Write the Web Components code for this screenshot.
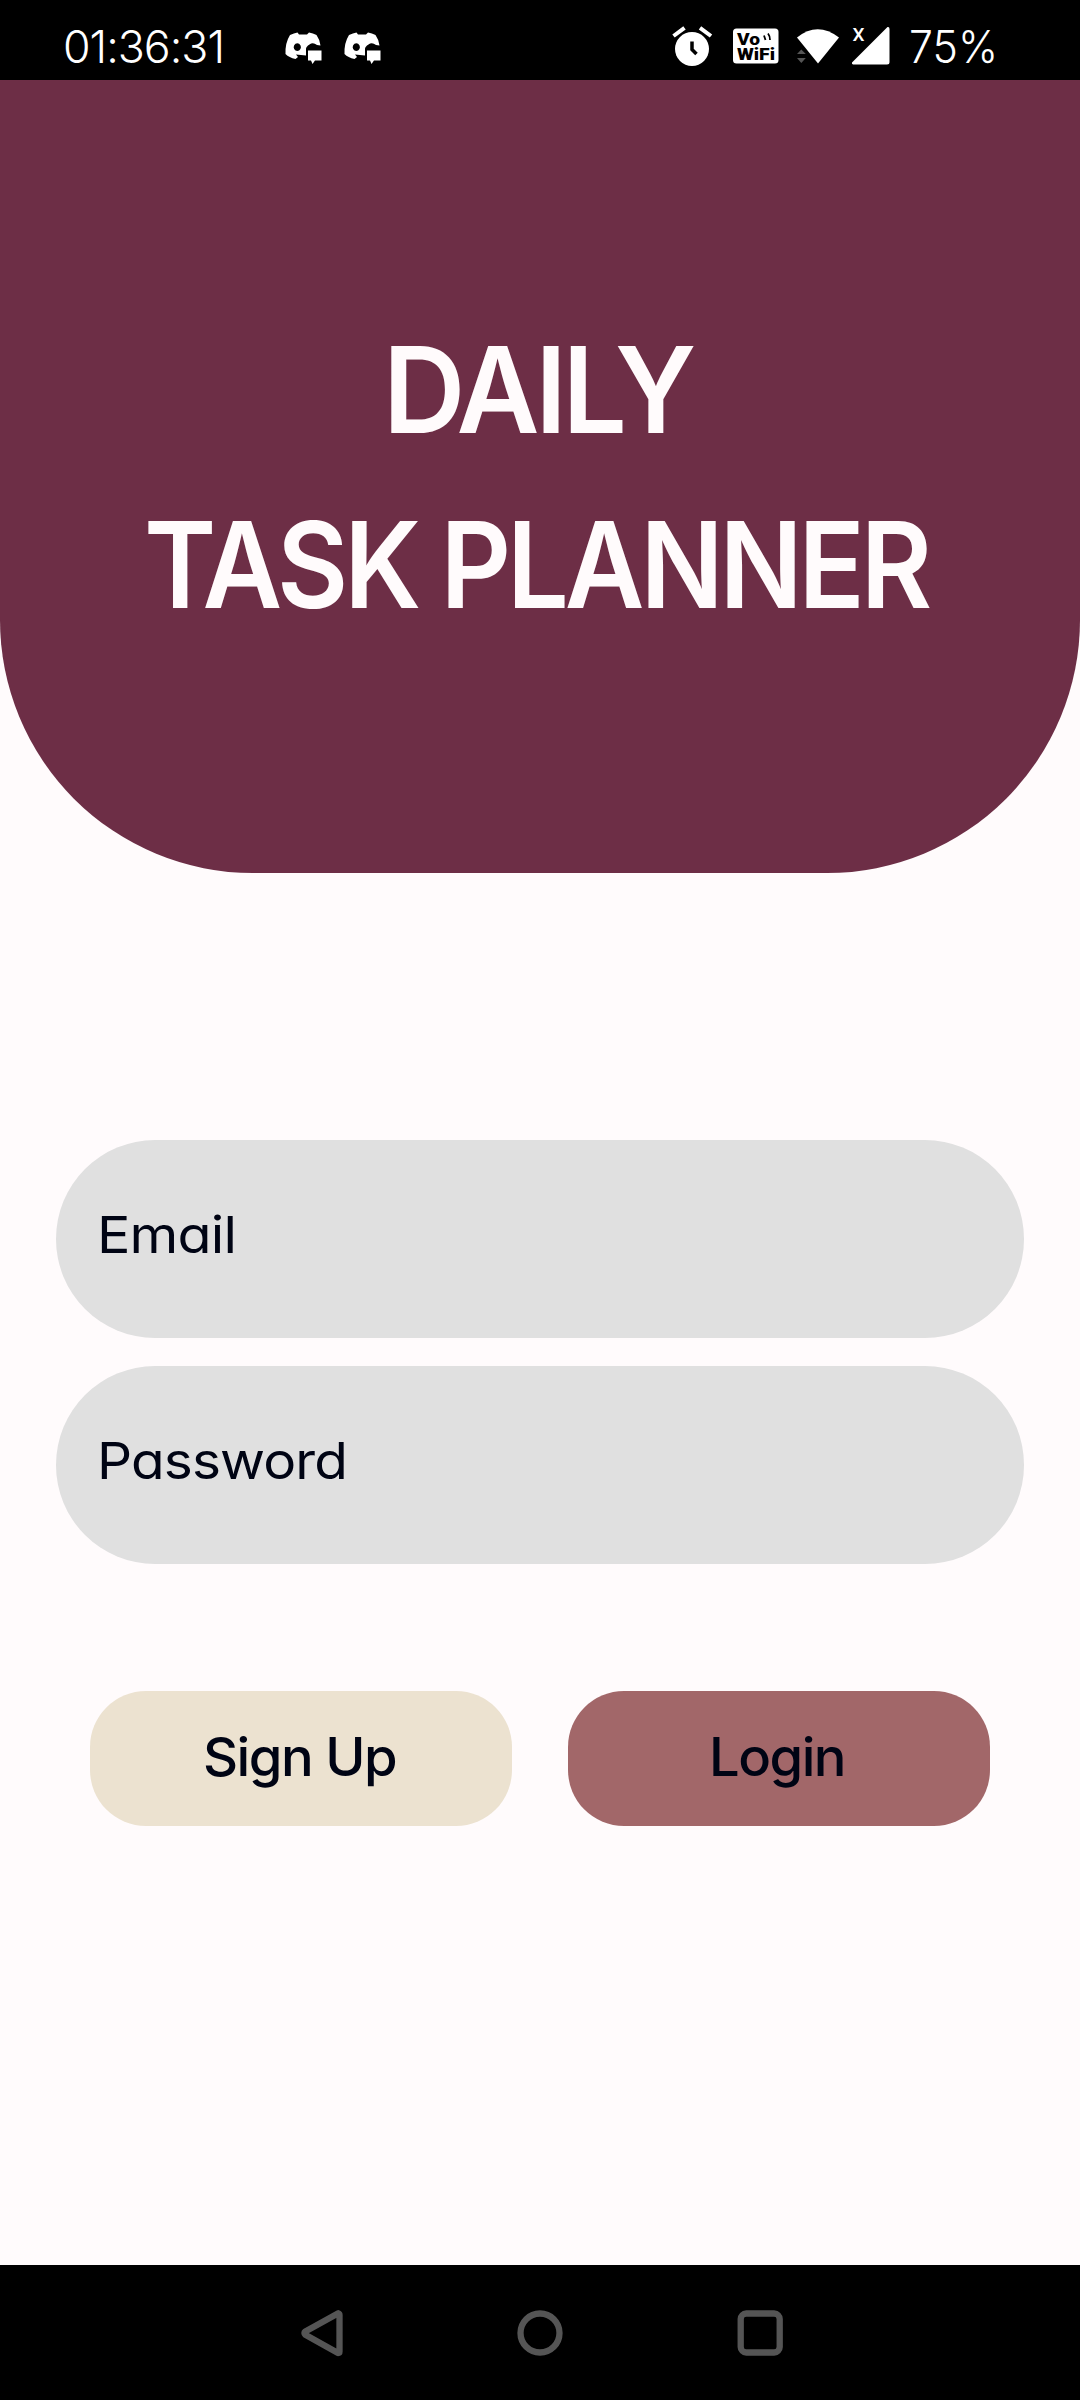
<!DOCTYPE html>
<html lang="en">
<head>
<meta charset="utf-8">
<title>Daily Task Planner</title>
<style>
html,body{margin:0;padding:0}
body{width:1080px;height:2400px;background:#fffbfc;overflow:hidden;font-family:Inter,"Noto Sans",sans-serif}
</style>
</head>
<body>
<planner-screen></planner-screen>
<script>
class Base extends HTMLElement{
  constructor(){super();this.attachShadow({mode:'open'}).innerHTML=this.render();}
}
/* Text condensed or widened so that its line is exactly `width` pixels long. */
class FitText extends Base{
  render(){return `<style>:host{display:block;white-space:pre;font-feature-settings:"cv11" 1,"calt" 0}span{display:inline-block;transform-origin:0 50%}</style><span><slot></slot></span>`}
  connectedCallback(){
    const s=this.shadowRoot.querySelector('span'),t=+this.getAttribute('width');
    const w=s.getBoundingClientRect().width;
    s.style.transform=`scaleX(${t/w})`;
    s.style.marginRight=(t-w)+'px';
  }
}
class StatusBar extends Base{
  render(){return `<style>
  :host{display:flex;height:80px;background:#000;color:#fff;box-sizing:border-box}
  .l,.r{display:flex;align-items:flex-start}
  .l{padding-left:63px;flex:1}
  fit-text{font-size:45.500px;font-weight:300;line-height:94px}
  svg{display:block}
  </style>
  <div class="l"><fit-text width="161" style="letter-spacing:-1px">01:36:31</fit-text>
  <svg width="120" height="80" viewBox="280 0 120 80" style="margin-left:56px">
    <defs><g id="d"><path fill="#fff" fill-rule="evenodd" d="M290 35Q294 33 297.500 32.500L299 34.500H307L309 32.500Q313 33 316.500 35Q320 40 320.500 45.500L317 45Q313 42 309.500 44.500Q306 46.500 306 49V55.500L296 54.500L298 57L295.500 59Q289 57.500 285.500 54Q285 43 290 35ZM297.300 43.200A3.600 3.900 0 1 0 297.310 43.200Z"/><path fill="#fff" d="M308 50.500H321.500V60.500H315L312.500 64L311 60.500H308Z"/></g></defs>
    <use href="#d"/><use href="#d" x="59"/>
  </svg></div>
  <div class="r">
  <svg width="230" height="80" viewBox="665 0 230 80">
    <g stroke="#fff" stroke-width="4" fill="none"><path d="M673.500 36L684.500 27.800M700 27.800L711 36"/></g>
    <circle cx="692" cy="49" r="17" fill="#fff"/><path d="M692 41.500V49.500L696.500 54" fill="none" stroke="#000" stroke-width="3.500"/>
    <rect x="733" y="28.500" width="45.500" height="35" rx="3.500" fill="#fff"/>
    <g fill="#000" font-family="Roboto,sans-serif" font-weight="900" font-size="17"><text x="737" y="44.500" textLength="23" lengthAdjust="spacingAndGlyphs">Vo</text><text x="737" y="60.300" textLength="38" lengthAdjust="spacingAndGlyphs">WiFi</text></g>
    <path d="M764 35.500L765.500 40M768 33.500Q770 36 770 40" fill="none" stroke="#000" stroke-width="1.800"/>
    <path fill="#fff" d="M797 37.500Q817.500 21 839 37.500L818 63.500Z"/>
    <path fill="#555" d="M797 54L801.300 49.500L805.800 54ZM797 58H805.800L801.300 63Z"/>
    <path fill="#fff" d="M852 62.500L887.500 27Q889.500 26.500 889.500 29V62Q889.500 64.500 887 64.500H853Q851.500 64 852 62.500Z"/>
    <text x="852.500" y="41" font-size="19" font-family="Roboto,sans-serif" font-weight="500" fill="#fff" textLength="12">X</text>
  </svg>
  <fit-text width="89" style="padding:0 82px 0 14px">75%</fit-text></div>`}
}
class HeroHeader extends Base{
  render(){return `<style>
  :host{display:flex;flex-direction:column;align-items:flex-start;height:793px;box-sizing:border-box;padding-top:223px;background:#6d2e46;border-radius:0 0 253px 253px;color:#fffbfc}
  fit-text{font-size:119.300px;font-weight:600;line-height:174.700px;letter-spacing:-4.500px}
  </style><fit-text width="309" style="padding-left:383px">DAILY</fit-text><fit-text width="784" style="padding-left:144px">TASK PLANNER</fit-text>`}
}
class TextField extends Base{
  render(){return `<style>
  :host{display:block;box-sizing:border-box;height:198px;border-radius:99px;background:#e0e0e0;color:#000414;padding-left:41px;font-size:51px;font-weight:400;line-height:190px;letter-spacing:-.8px}
  </style><slot></slot>`}
}
class PillButton extends Base{
  render(){return `<style>
  :host{display:block;box-sizing:border-box;width:422px;height:135px;border-radius:56px;color:#000414;background:var(--fill);font-size:53.500px;font-weight:540;line-height:132px;letter-spacing:-1.500px}
  </style><slot></slot>`}
}
class NavBar extends Base{
  render(){return `<style>:host{display:block;height:135px;background:#000}svg{display:block;margin:auto}</style>
  <svg width="540" height="135" viewBox="270 2265 540 135" fill="none" stroke="#555" stroke-width="6.300" stroke-linejoin="round">
  <path d="M338.300 2313.200Q339.500 2313.500 339.500 2315V2351.500Q339.500 2353 338 2353L305.300 2334.800Q303.500 2333 305.300 2331.500Z"/>
  <circle cx="540" cy="2333" r="19.500"/><rect x="740.700" y="2313.500" width="39" height="39" rx="5.500"/></svg>`}
}
/* Labels are slotted, so the controls stay independent of their captions. */
class PlannerScreen extends Base{
  render(){return `<style>
  :host{display:flex;flex-direction:column;width:1080px;height:2400px;background:#fffbfc}
  .fields{display:flex;flex-direction:column;gap:28px;padding:267px 56px 0}
  .actions{display:flex;gap:56px;padding:126.500px 90px 0}
  nav-bar{margin-top:auto}
  </style>
  <status-bar></status-bar><hero-header></hero-header>
  <div class="fields"><text-field><fit-text width="139">Email</fit-text></text-field><text-field><fit-text width="250">Password</fit-text></text-field></div>
  <div class="actions"><pill-button style="--fill:#ece2d0"><fit-text width="193" style="padding-left:113px">Sign Up</fit-text></pill-button><pill-button style="--fill:#a26769"><fit-text width="136" style="padding-left:141px">Login</fit-text></pill-button></div>
  <nav-bar></nav-bar>`}
}
for(const [n,c] of [['status-bar',StatusBar],['hero-header',HeroHeader],['text-field',TextField],['pill-button',PillButton],['nav-bar',NavBar],['planner-screen',PlannerScreen],['fit-text',FitText]])customElements.define(n,c);
</script>
</body>
</html>
